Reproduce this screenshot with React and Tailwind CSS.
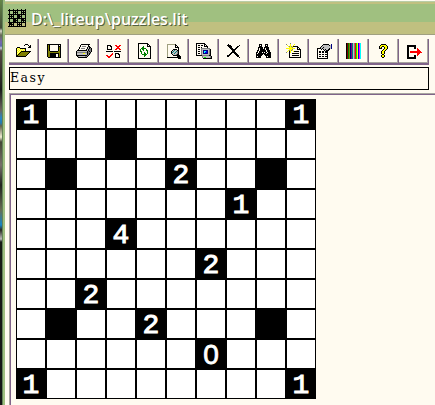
import React from "react";

const COLORS = {
  K: "#000000", W: "#ffffff", Z: "#fffbf0", Y: "#ffff00", P: "#ffff99", O: "#808000", G: "#c0c0c0",
  D: "#808080", R: "#ff0000", N: "#008000", B: "#000080", C: "#00ffff", T: "#008080",
  L: "#0000ff", M: "#ff00ff", E: "#00ff00", V: "#800080", A: "#800000", S: "#a0a080",
};

// Each toolbar glyph is a 16x16 bitmap, one letter per pixel.
const ICONS = {
  open: [
    "................",
    ".........KKK....",
    "........K...K.K.",
    ".............KK.",
    ".KKK........KKK.",
    "KYPYKKKKKK......",
    "KPYPYPYPYK......",
    "KYPYPYPYPK......",
    "KPYPYKKKKKKKKKK.",
    "KYPYKOOOOOOOOK..",
    "KPYKOOOOOOOOK...",
    "KYKOOOOOOOOK....",
    "KKOOOOOOOOK.....",
    "KKKKKKKKKK......",
    "................",
    "................",
  ],
  save: [
    "................",
    ".KKKKKKKKKKKKKK.",
    ".KOKZZZZZZZZKZK.",
    ".KOKZZZZZZZZKKK.",
    ".KOKZZZZZZZZKOK.",
    ".KOKZZZZZZZZKOK.",
    ".KOKZZZZZZZZKOK.",
    ".KOKZZZZZZZZKOK.",
    ".KOOKKKKKKKKOOK.",
    ".KOOOOOOOOOOOOK.",
    ".KOOKKKKKKKKKOK.",
    ".KOOKKKKKKZZKOK.",
    ".KOOKKKKKKZZKOK.",
    ".KOOKKKKKKZZKOK.",
    "..KKKKKKKKKKKKK.",
    "................",
  ],
  print: [
    "................",
    ".....KKKKKKKKK..",
    "....KZZZZZZZK...",
    "....KZDDDDZZKK..",
    "...KZZZZZZZKGKK.",
    "...KZDDDDZZKGKDK",
    "..KZZZZZZZKGKDDK",
    ".KKKKKKKKKKGKDDK",
    "KGGGGGGGGGGKDKDK",
    "KDDDDDDDDDDKDDK.",
    "KGGGGGGYYGGKDKD.",
    "KGGGGGGGGGGKDK..",
    "KKKKKKKKKKKDK...",
    ".KDGGGGGGDDK....",
    "..KKKKKKKKK.....",
    "................",
  ],
  check: [
    "................",
    "................",
    ".KKKK....RR..RR.",
    ".K..KK....RRRR..",
    ".K...K.....RR...",
    ".K...K....RRRR..",
    ".KKKKK...RR..RR.",
    "................",
    "KKKKKKK.KKKKKKK.",
    "................",
    "......R..KKKK...",
    ".....RR..K..KK..",
    "RR..RR...K...K..",
    ".RRRR....K...K..",
    "..RR.....KKKKK..",
    "................",
  ],
  refresh: [
    "..KKKKKKKKKK....",
    "..KZZZZZZZZKK...",
    "..KZZZZZZZZKZK..",
    "..KZZZZNZZZKKKK.",
    "..KZZZNNZZZZZZK.",
    "..KZZNNNNNZZZZK.",
    "..KZNZNNZZNZZZK.",
    "..KZNZZNZZNNZZK.",
    "..KZNNZZZZZNZZK.",
    "..KZZNZZNZZNZZK.",
    "..KZZNZZNNZNZZK.",
    "..KZZZNNNNNZZZK.",
    "..KZZZZZNNZZZZK.",
    "..KZZZZZNZZZZZK.",
    "..KZZZZZZZZZZZK.",
    "..KKKKKKKKKKKKK.",
  ],
  preview: [
    "................",
    ".SSSSSSSSK......",
    ".SZZZZZZZKK.....",
    ".SZZZZZZZKZK....",
    ".SZZZZZZZKKKK...",
    ".SZZZZZZZZZZK...",
    ".SZZZZZKKKKZK...",
    ".SZZZZKGTGGKK...",
    ".SZZZKGTGGTDK...",
    ".SZZZKTGGTGDK...",
    ".SZZZKGGTGGDK...",
    ".SZZZZKGGGDKK...",
    ".SZZZZZKKKKKKK..",
    ".SZZZZZZZZZKKKK.",
    ".KKKKKKKKKKKKKK.",
    "............KKK.",
  ],
  docpc: [
    "KKKKKKKKK.......",
    "KZZZZZZZKK......",
    "KZKKZKKZKZK.....",
    "KZZZZZZZKKKK....",
    "KZKKZKZZZZZK....",
    "KZZZZDDDDDDDDD..",
    "KZKKZDGGGGGGGDK.",
    "KZZZZDGBBBBBGDK.",
    "KZKKZDGBCCLBGDK.",
    "KZZZZDGBCLLBGDK.",
    "KZKKZDGBBBBBGDK.",
    "KZZZZDGGGGGGGDK.",
    "KKKKKKDDDDDDDKK.",
    "......DGGGGGGGDK",
    "......DGEEGGGGDK",
    ".......KKKKKKKKK",
  ],
  cross: [
    "................",
    "..K.............",
    ".KKKK........K..",
    "..KKKK.....KK...",
    "...KKK....KK....",
    "....KKK..KK.....",
    ".....KKKKK......",
    "......KKK.......",
    "......KKK.......",
    ".....KKKKK......",
    "....KK..KKK.....",
    "...KK....KKK....",
    ".KKK......KKK...",
    ".KK........KK...",
    ".............K..",
    "................",
  ],
  find: [
    "................",
    "...KKK...KKK....",
    "...KZK...KZK....",
    "...KKK...KKK....",
    "..KKKKK.KKKKK...",
    "..KZKKK.KZKKK...",
    "..KZKKKKKZKKK...",
    ".KKZKKKKKKZKKK..",
    ".KZKKKKKKKZKKK..",
    "KKZKKKZKZKKZKKK.",
    "KZKKKKKKKKZKKKK.",
    "KKKKKKK.KKKKKKK.",
    "KKKKKK...KKKKKK.",
    "KZKKK.....KZKKK.",
    "KKKKK.....KKKKK.",
    "................",
  ],
  create: [
    "....D...........",
    "D...Y...Y.......",
    ".Y..Y..Y........",
    "..YDYDYKKKKK....",
    "...YYYDZZZZKK...",
    "YYYYYYYYYZZKZK..",
    "...YYYDZZZZKKKK.",
    "..YDYDYZZZZZZZK.",
    ".Y.KY..YKKKKKZK.",
    "D..KY..ZZZZZZZK.",
    "...KZZKKKKKKKZK.",
    "...KZZZZZZZZZZK.",
    "...KZZKKKKKKKZK.",
    "...KZZZZZZZZZZK.",
    "...KKKKKKKKKKKK.",
    "................",
  ],
  props: [
    "................",
    ".......KKKKKK..B",
    "......KGGGGGGKGB",
    ".....KGGGGGGGGGB",
    "....KGGKGGGGGGGB",
    ".KKKKGKGGGGGGKGB",
    ".KZZZKZKGKGGKK..",
    ".KZZZZZZKGKKK...",
    ".KZKKZKKZKKK....",
    ".KZKKZKKZKKK....",
    ".KZZZZZZZZZK....",
    ".KZKKZKKZKKK....",
    ".KZZZZZZZZZK....",
    ".KZKKZKKZKKK....",
    ".KZZZZZZZZZK....",
    ".KKKKKKKKKKK....",
  ],
  palette: Array(16).fill("KANOBVTGDREYLMCZ"),
  help: [
    "................",
    ".....KKKKK......",
    "....KYYYYYK.....",
    "...KYYKKYYYK....",
    "...KYK..KYYK....",
    "...KKK..KYYK....",
    ".......KYYK.....",
    "......KYYK......",
    ".....KYYK.......",
    ".....KYYK.......",
    ".....KYYK.......",
    "......KK........",
    ".....KYYK.......",
    ".....KYYK.......",
    "......KK........",
    "................",
  ],
  exit: [
    "................",
    "................",
    ".KKKKKKKKK......",
    ".KKKKKKKKK......",
    ".KK.....KK......",
    ".KK.....KK.R....",
    ".KK........RR...",
    ".KK........RRR..",
    ".KK.RRRRRRRRRRR.",
    ".KK.RRRRRRRRRRRR",
    ".KK........RRR..",
    ".KK........RR...",
    ".KK.....KK.R....",
    ".KK.....KK......",
    ".KKKKKKKKK......",
    ".KKKKKKKKK......",
  ],
};

const GRID = [
  "1........1",
  "...#......",
  ".#...2..#.",
  ".......1..",
  "...4......",
  "......2...",
  "..2.......",
  ".#..2...#.",
  "......0...",
  "1........1",
];

function Pixels({ rows }) {
  return (
    <svg width={rows[0].length} height={rows.length} shapeRendering="crispEdges" className="block shrink-0">
      {rows.flatMap((row, y) =>
        [...row].map((c, x) =>
          c === "." ? null : <rect key={`${x}-${y}`} x={x} y={y} width="1" height="1" fill={COLORS[c]} />
        )
      )}
    </svg>
  );
}

const APP_ICON = [
  ".K...K...K...K...K",
  "KKKKKKKKKKKKKKKKKK",
  ".K...K.K.K...K.K.K",
  ".K...KKKKK...KKKKK",
  ".K...K.K.K...K.K.K",
  "KKKKKKKKKKKKKKKKKK",
  ".K.K.K...KKK.K...K",
  ".KKKKK...KKKKK...K",
  ".K.K.K...KKK.K...K",
  "KKKKKKKKKKKKKKKKKK",
  ".K...KKK.K...KKK.K",
  ".K...KKKKK...KKKKK",
  ".K...KKK.K...K.K.K",
  "KKKKKKKKKKKKKKKKKK",
  ".KKK.K...K.K.K...K",
  ".KKKKK...KKKKK...K",
  ".K.K.K...K.K.K...K",
  "KKKKKKKKKKKKKKKKKK",
];

function ToolButton({ name }) {
  return (
    <button className="h-[26px] w-[30px] border-b-2 border-r border-[#80648a]">
      <span className="flex h-6 w-[29px] border-b border-r border-[#a8a5a0] pl-[7px] pt-1">
        <Pixels rows={ICONS[name]} />
      </span>
    </button>
  );
}

function Cell({ value }) {
  const filled = value !== ".";
  const font =
    value === "0"
      ? "pt-px font-['Liberation_Sans',sans-serif] [-webkit-text-stroke:0.8px_white]"
      : "pt-[3px] font-['Liberation_Mono',monospace] [-webkit-text-stroke:1px_white]";
  return (
    <div className={`flex h-[30px] w-[30px] items-center justify-center border border-black text-[28px] leading-none text-white ${filled ? "bg-black" : "bg-white"} ${font}`}>
      {filled && value !== "#" ? value : ""}
    </div>
  );
}

export default function App() {
  return (
    <div className="flex h-[405px] w-[435px] overflow-hidden bg-[#fffbf0]">
      <div className="w-0.5 shrink-0 bg-[linear-gradient(#648747_0,#424c37_28px,#d4d5c8_31px,#666c56_35px,#7668ae_42px,#5c69a7_46px,#c6cadd_48px,#574c43_51px,#1a1d19_90px,#6c655d_110px,#2586c5_118px,#267baf_123px,#63634d_126px,#f0edd1_137px,#434733_142px,#77716a_165px,#20241c_185px,#686e53_210px,#1686c5_225px,#292920_230px,#bbb_239px,#171c14_242px,#151515_100%)]" />
      <div className="w-[3px] shrink-0 border-l border-[#638357] bg-[#a0c080]" />
      <div className="flex min-w-0 flex-1 flex-col">
        <header className="flex h-[35px] shrink-0 items-start border-b border-[#a0a080] bg-[linear-gradient(#fffbf0_0,#fffbf0_1px,#b9cda7_1px,#b9cda7_2px,#c0c080_2px,#c0c080_4px,#a0c080_4px,#a0c080_22px,#c0c080_22px)] pl-[3px] pt-[9px]">
          <Pixels rows={APP_ICON} />
          <h1 className="ml-[5px] whitespace-nowrap font-['Open_Sans','Noto_Sans',sans-serif] text-[16px] font-semibold leading-5 text-white [text-shadow:1px_1px_0_#53613e]">
            D:\_liteup\puzzles.lit
          </h1>
        </header>
        <nav className="ml-1 mt-1 flex h-[26px] shrink-0">
          {Object.keys(ICONS).map((name) => (
            <ToolButton key={name} name={name} />
          ))}
        </nav>
        <div className="ml-1 mt-0.5 h-[23px] w-[420px] shrink-0 border border-black font-['DejaVu_Serif',serif] text-[12.5px] leading-[19px] tracking-[1.5px] text-black">
          Easy
        </div>
        <main className="ml-1 mt-[3px] flex-1 border-l border-t border-[#a8a5a0]">
          <div className="h-full border-l border-t border-[#80648a] pl-[5px] pt-1">
            <div className="grid w-[300px] grid-cols-10">
              {[...GRID.join("")].map((v, i) => (
                <Cell key={i} value={v} />
              ))}
            </div>
          </div>
        </main>
      </div>
    </div>
  );
}
